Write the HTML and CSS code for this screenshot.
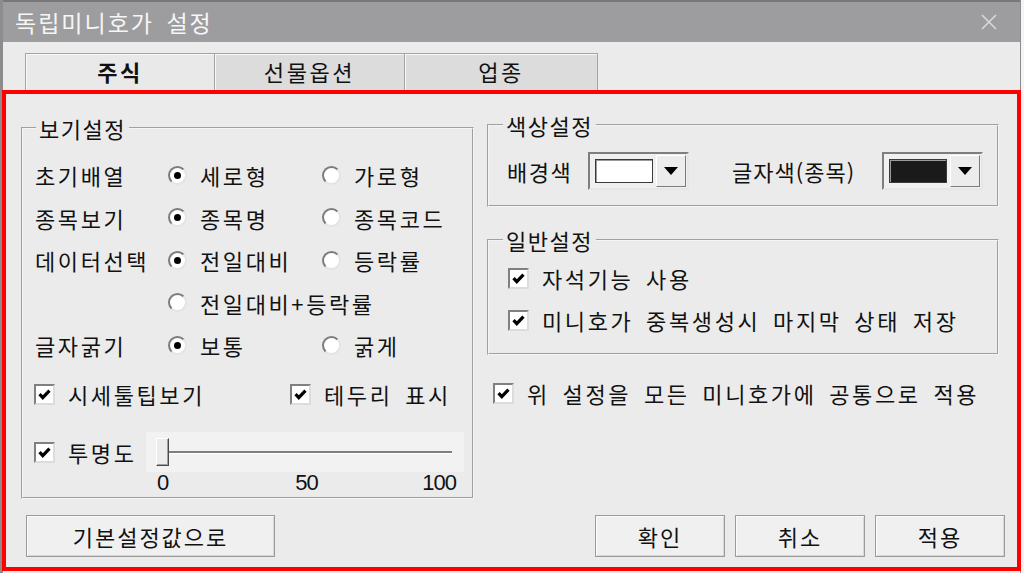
FILE: index.html
```html
<!DOCTYPE html>
<html lang="ko">
<head>
<meta charset="utf-8">
<link rel="stylesheet" href="styles.css">
</head>
<body>
<div class="window">
  <div class="titlebar">
    <span class="title">독립미니호가 설정</span>
    <svg class="close" width="18" height="18" viewBox="0 0 18 18"><path d="M2 2 L16 16 M16 2 L2 16" stroke="#d8d8da" stroke-width="1.6" fill="none"/></svg>
  </div>
  <div class="tabstrip">
    <div class="tab active">주식</div>
    <div class="tab">선물옵션</div>
    <div class="tab">업종</div>
  </div>
  <div class="panel">
    <div class="col-left">
      <fieldset class="group view">
        <legend>보기설정</legend>
        <div class="row"><span class="lbl">초기배열</span><span class="opt"><i class="radio on"></i>세로형</span><span class="opt"><i class="radio"></i>가로형</span></div>
        <div class="row"><span class="lbl">종목보기</span><span class="opt"><i class="radio on"></i>종목명</span><span class="opt"><i class="radio"></i>종목코드</span></div>
        <div class="row"><span class="lbl">데이터선택</span><span class="opt"><i class="radio on"></i>전일대비</span><span class="opt"><i class="radio"></i>등락률</span></div>
        <div class="row"><span class="lbl"></span><span class="opt"><i class="radio"></i>전일대비+등락률</span></div>
        <div class="row"><span class="lbl">글자굵기</span><span class="opt"><i class="radio on"></i>보통</span><span class="opt"><i class="radio"></i>굵게</span></div>
        <div class="cbrow">
          <span class="cbitem first"><i class="check"><svg viewBox="0 0 13 13"><path d="M2.2 6.2 L5 9.2 L10.8 3.2"/></svg></i>시세툴팁보기</span>
          <span class="cbitem"><i class="check"><svg viewBox="0 0 13 13"><path d="M2.2 6.2 L5 9.2 L10.8 3.2"/></svg></i>테두리 표시</span>
        </div>
        <div class="sliderrow">
          <span class="cbitem"><i class="check"><svg viewBox="0 0 13 13"><path d="M2.2 6.2 L5 9.2 L10.8 3.2"/></svg></i>투명도</span>
          <div class="slidercol">
            <div class="slider"><span class="thumb"></span><span class="track"></span></div>
            <div class="scale"><span class="s0">0</span><span class="s50">50</span><span class="s100">100</span></div>
          </div>
        </div>
      </fieldset>
      <div class="btnrow left"><button class="btn wide">기본설정값으로</button></div>
    </div>
    <div class="col-right">
      <fieldset class="group color">
        <legend>색상설정</legend>
        <div class="colorrow">
          <span class="clbl">배경색</span>
          <span class="combo"><span class="swatch white"></span><span class="arrow"><i class="tri"></i></span></span>
          <span class="clbl second">글자색(종목)</span>
          <span class="combo"><span class="swatch black"></span><span class="arrow"><i class="tri"></i></span></span>
        </div>
      </fieldset>
      <fieldset class="group general">
        <legend>일반설정</legend>
        <div class="grow"><span class="cbitem"><i class="check"><svg viewBox="0 0 13 13"><path d="M2.2 6.2 L5 9.2 L10.8 3.2"/></svg></i>자석기능 사용</span></div>
        <div class="grow"><span class="cbitem"><i class="check"><svg viewBox="0 0 13 13"><path d="M2.2 6.2 L5 9.2 L10.8 3.2"/></svg></i>미니호가 중복생성시 마지막 상태 저장</span></div>
      </fieldset>
      <div class="common"><span class="cbitem"><i class="check"><svg viewBox="0 0 13 13"><path d="M2.2 6.2 L5 9.2 L10.8 3.2"/></svg></i>위 설정을 모든 미니호가에 공통으로 적용</span></div>
      <div class="btnrow right">
        <button class="btn">확인</button>
        <button class="btn">취소</button>
        <button class="btn">적용</button>
      </div>
    </div>
  </div>
</div>
</body>
</html>
```

FILE: styles.css
```css
* { box-sizing: border-box; }
html, body { margin: 0; padding: 0; }
body {
  width: 1024px;
  height: 573px;
  background: #f4f4f4;
  font-family: "Noto Sans CJK KR", "Noto Sans", sans-serif;
  font-size: 22px;
  line-height: 24px;
  letter-spacing: 2.6px;
  word-spacing: 4px;
  color: #111111;
  overflow: hidden;
}
.window {
  width: 1021px;
  height: 573px;
  background: #e9e9e9;
  border-left: 3px solid #8c8c8e;
  border-right: 1px solid #8c8c8e;
  display: flex;
  flex-direction: column;
}
.titlebar {
  height: 42px;
  flex: 0 0 42px;
  background: #9d9d9f;
  border-top: 2px solid #77777a;
  display: flex;
  align-items: center;
  padding-left: 12px;
  padding-right: 22px;
}
.title { color: #f6f6f6; flex: 1; font-size: 23px; letter-spacing: 2px; word-spacing: 4px; }
.close { flex: 0 0 auto; }
.tabstrip {
  height: 48px;
  flex: 0 0 48px;
  background: #ebebeb;
  padding: 11px 0 0 22px;
  display: flex;
}
.tab {
  width: 190px;
  height: 37px;
  border: 1px solid #a4a4a4;
  border-bottom: none;
  box-shadow: inset 1px 1px 0 #f8f8f8;
  background: #dcdcdc;
  text-align: center;
  padding-top: 5px;
}
.tab + .tab { border-left: none; width: 190px; }
.tab:last-child { width: 193px; }
.tab.active { background: #e9e9e9; font-weight: bold; }
.panel {
  flex: 1;
  margin: 0 -1px 2px -1px;
  border: 4px solid #fe0000;
  background: #ebebeb;
  display: flex;
  padding: 19px 12px 10px 15px;
}
.col-left {
  width: 453px;
  flex: 0 0 453px;
  display: flex;
  flex-direction: column;
  padding-top: 3px;
}
.col-right {
  flex: 1;
  margin-left: 13px;
  display: flex;
  flex-direction: column;
}
.group {
  margin: 0;
  min-width: 0;
  border: 2px groove #f4f4f4;
  padding: 0;
}
.group legend {
  padding: 0 3px;
  line-height: 24px;
  letter-spacing: 1.5px;
}
.view { padding: 14px 0 3px 12px; }
.view legend { margin-left: 1px; }
.row { display: flex; align-items: center; height: 42.5px; white-space: nowrap; }
.lbl { width: 133px; flex: 0 0 133px; }
.opt { width: 154px; flex: 0 0 154px; display: flex; align-items: center; }
.opt:last-child { flex: 0 0 auto; width: auto; }
.radio {
  width: 19px;
  height: 19px;
  flex: 0 0 19px;
  border-radius: 50%;
  background: #fff;
  border: 2px solid;
  border-color: #7c7c7c #e4e4e4 #e4e4e4 #7c7c7c;
  margin-right: 13px;
  display: flex;
  align-items: center;
  justify-content: center;
}
.radio.on::after {
  content: "";
  width: 7px;
  height: 7px;
  border-radius: 50%;
  background: #000;
}
.cbitem { display: flex; align-items: center; white-space: nowrap; }
.check {
  width: 21px;
  height: 21px;
  flex: 0 0 21px;
  background: #fff;
  border: 2px solid;
  border-color: #808080 #dcdcdc #dcdcdc #808080;
  margin-right: 13px;
  display: flex;
  align-items: center;
  justify-content: center;
}
.check svg { width: 15px; height: 15px; }
.check path { stroke: #000; stroke-width: 2.8; fill: none; }
.cbrow { display: flex; align-items: center; height: 40px; margin-top: 7.5px; margin-left: -1px; }
.cbitem.first { width: 256px; flex: 0 0 256px; }
.sliderrow { display: flex; align-items: flex-start; margin-top: 18px; margin-left: -1px; }
.sliderrow > .cbitem { height: 40px; width: 112px; flex: 0 0 112px; }
.slidercol { margin-left: 0; }
.slider {
  width: 318px;
  height: 40px;
  background: #f2f2f2;
  display: flex;
  align-items: center;
  padding-left: 10px;
}
.thumb {
  width: 13px;
  height: 28px;
  flex: 0 0 13px;
  background: #ececec;
  border: 1px solid;
  border-color: #ffffff #4a4a4a #4a4a4a #ffffff;
  box-shadow: inset -1px -1px 0 #a0a0a0;
}
.track {
  flex: 0 0 283px;
  height: 3px;
  border-top: 2px solid #7e7e7e;
  border-bottom: 1px solid #ffffff;
}
.scale {
  margin-left: 11px;
  width: 299px;
  height: 22px;
  display: grid;
  grid-template-columns: 1fr auto 1fr;
  font-family: "Liberation Sans", Arial, sans-serif;
  font-size: 22px;
  line-height: 22px;
  letter-spacing: -1px;
}
.s100 { justify-self: end; }
.btnrow { margin-top: auto; display: flex; }
.btnrow.left { padding-left: 5px; }
.btnrow.right { justify-content: flex-end; gap: 10px; }
.btn {
  font: inherit;
  letter-spacing: 2px;
  color: #111111;
  width: 130px;
  height: 42px;
  background: #f0f0f0;
  border: 1px solid #9a9a9a;
  box-shadow: inset 1px 1px 0 #fbfbfb, inset -1px -1px 0 #d8d8d8;
  padding: 0;
}
.btn.wide { width: 249px; }
.color { margin-right: 6px; padding: 15px 0 15px 18px; }
.color legend { margin-left: -4px; }
.colorrow { display: flex; align-items: center; height: 38px; white-space: nowrap; }
.clbl { width: 81px; flex: 0 0 81px; letter-spacing: 1.5px; }
.clbl.second { margin-left: 43px; width: 150px; flex: 0 0 150px; letter-spacing: 1px; }
.combo {
  width: 101px;
  flex: 0 0 101px;
  height: 38px;
  display: flex;
  align-items: center;
  border: 2px solid;
  border-color: #7e7e7e #e6e6e6 #e6e6e6 #7e7e7e;
  background: #f0f0f0;
  padding: 2px 1px 2px 5px;
}
.swatch {
  width: 58px;
  height: 24px;
  border: 1px solid #3a3a3a;
  box-shadow: inset 1px 1px 0 #9a9a9a;
}
.swatch.white { background: #ffffff; }
.swatch.black { background: #1a1a1a; }
.arrow {
  margin-left: auto;
  width: 30px;
  height: 32px;
  background: #ececec;
  border: 1px solid;
  border-color: #ffffff #7a7a7a #7a7a7a #ffffff;
  display: flex;
  align-items: center;
  justify-content: center;
}
.tri {
  width: 0;
  height: 0;
  border-left: 7px solid transparent;
  border-right: 7px solid transparent;
  border-top: 8px solid #000;
}
.general { margin-top: 21px; margin-right: 6px; padding: 5px 8px 12px 19px; }
.general legend { margin-left: -5px; }
.grow { height: 42px; display: flex; align-items: center; }
.common { height: 40px; display: flex; align-items: center; margin-top: 18px; padding-left: 6px; }
```
